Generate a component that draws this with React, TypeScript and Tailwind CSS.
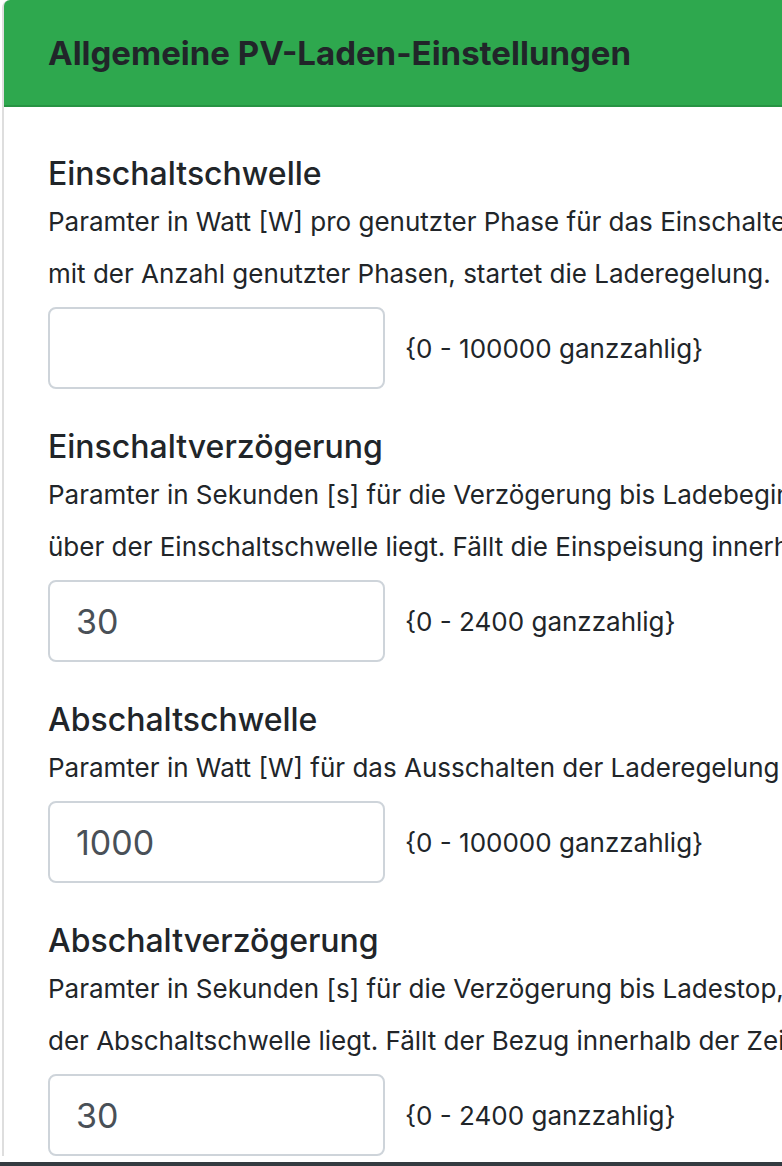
import React from 'react'

interface Setting {
  title: string
  lines: string[]
  value: string
  hint: string
}

const SETTINGS: Setting[] = [
  {
    title: 'Einschaltschwelle',
    lines: [
      'Paramter in Watt [W] pro genutzter Phase für das Einschalten der PV-Ladung. Die Einspeisung, multipliziert',
      'mit der Anzahl genutzter Phasen, startet die Laderegelung.',
    ],
    value: '',
    hint: '{0 - 100000 ganzzahlig}',
  },
  {
    title: 'Einschaltverzögerung',
    lines: [
      'Paramter in Sekunden [s] für die Verzögerung bis Ladebeginn, wenn die Einspeisung dauerhaft',
      'über der Einschaltschwelle liegt. Fällt die Einspeisung innerhalb der Zeit unter die Schwelle, wird neu gestartet.',
    ],
    value: '30',
    hint: '{0 - 2400 ganzzahlig}',
  },
  {
    title: 'Abschaltschwelle',
    lines: ['Paramter in Watt [W] für das Ausschalten der Laderegelung bei Netzbezug.'],
    value: '1000',
    hint: '{0 - 100000 ganzzahlig}',
  },
  {
    title: 'Abschaltverzögerung',
    lines: [
      'Paramter in Sekunden [s] für die Verzögerung bis Ladestop, wenn der Bezug dauerhaft über',
      'der Abschaltschwelle liegt. Fällt der Bezug innerhalb der Zeit unter die Schwelle, wird neu gestartet.',
    ],
    value: '30',
    hint: '{0 - 2400 ganzzahlig}',
  },
]

function SettingRow({ s }: { s: Setting }) {
  return (
    <div className="mb-[38px]">
      <h4 className="text-[32px] leading-[40px] font-medium text-[#212529] whitespace-nowrap">{s.title}</h4>
      <div className="mt-[2px] text-[26px] leading-[52px] text-[#212529]">
        {s.lines.map(l => (
          <div key={l} className="whitespace-nowrap">{l}</div>
        ))}
      </div>
      <div className="mt-[7px] flex items-center gap-[20px]">
        <input
          type="text"
          defaultValue={s.value}
          className="h-[82px] w-[337px] rounded-[8px] border-2 border-[#ced4da] bg-white px-[26px] text-[34px] text-[#495057] outline-none"
        />
        <span className="text-[26px] text-[#212529] whitespace-nowrap">{s.hint}</span>
      </div>
    </div>
  )
}

export default function App() {
  return (
    <div
      className="relative h-[1166px] w-[782px] overflow-hidden bg-white"
      style={{ fontFamily: 'Inter, "Noto Sans", sans-serif' }}
    >
      <div className="ml-[2px] w-[1100px] rounded-t-[8px] border-l-2 border-t-0 border-[#dedede]">
        <div className="h-[107px] rounded-tl-[6px] border-b-2 border-[#279343] bg-[#2ea84e] pl-[44px] pt-[33px]">
          <h3 className="text-[33px] leading-[40px] font-bold text-[#212529] whitespace-nowrap">Allgemeine PV-Laden-Einstellungen</h3>
        </div>
        <div className="pl-[44px] pt-[47px]">
          {SETTINGS.map(s => (
            <SettingRow key={s.title} s={s} />
          ))}
        </div>
      </div>
      <div className="absolute bottom-0 left-0 h-[4px] w-full bg-[#343a40]" />
    </div>
  )
}
